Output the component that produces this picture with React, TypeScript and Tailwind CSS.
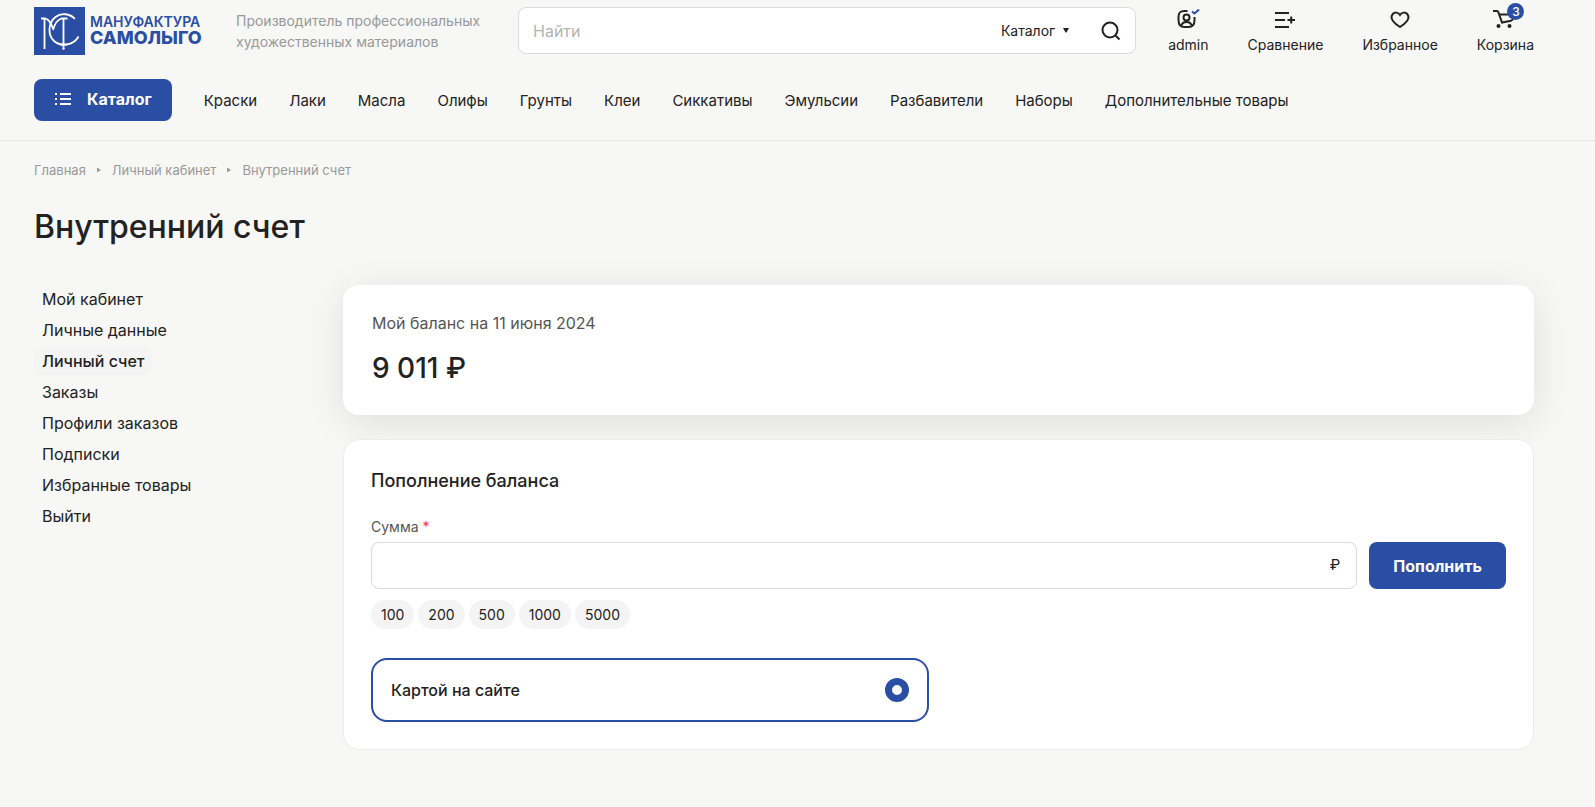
import { useState, type ReactNode } from "react";

const NAV_LINKS = [
  "Краски",
  "Лаки",
  "Масла",
  "Олифы",
  "Грунты",
  "Клеи",
  "Сиккативы",
  "Эмульсии",
  "Разбавители",
  "Наборы",
  "Дополнительные товары",
];

const ACCOUNT_LINKS = [
  "Мой кабинет",
  "Личные данные",
  "Личный счет",
  "Заказы",
  "Профили заказов",
  "Подписки",
  "Избранные товары",
  "Выйти",
];

const AMOUNTS = ["100", "200", "500", "1000", "5000"];

const Logo = () => (
  <a href="#" className="flex w-[170px] shrink-0 items-center gap-[5px] text-[#2b4ea5]">
    <svg width="51" height="48" viewBox="0 0 51 48" fill="none" aria-hidden="true">
      <rect width="51" height="48" fill="#2b4ea5" />
      <g stroke="#fff" strokeWidth="1.8">
        <path d="M10.5 11v31M7 11.500h4.500c3.500 1 5 4 7.500 10M19 23c1.500-6 4-10 8.500-11.500h6" />
        <path d="M29.500 12v28.500M26 37.500h7.500" />
        <path d="M41 12c-5-5.500-14-6.500-19.500-2C14 16 13.500 28 20 34c7.500 6.500 20 4 24.500-4.500" />
      </g>
      <circle cx="29.500" cy="41.500" r="1.200" fill="#fff" />
    </svg>
    <span className="flex flex-col pb-0.5">
      <span className="text-[14px] leading-4 font-semibold">МАНУФАКТУРА</span>
      <span className="text-[18px] leading-4 font-extrabold">САМОЛЫГО</span>
    </span>
  </a>
);

const HeaderLink = ({ label, badge, children }: { label: string; badge?: number; children: ReactNode }) => (
  <a href="#" className="flex flex-col items-center text-sm leading-5 hover:text-[#2b4ea5]">
    <span className="relative flex h-7 items-start justify-center pt-0.5">
      {children}
      {badge && (
        <span className="absolute -top-1 left-3.5 size-[17px] rounded-full bg-[#2b4ea5] text-center text-xs leading-[17px] font-medium text-white">
          {badge}
        </span>
      )}
    </span>
    {label}
  </a>
);

const Header = () => (
  <header className="border-b border-[#e5e5e3] pt-[7px] pr-[61px] pb-[19px] pl-[34px]">
    <div className="flex items-start">
      <Logo />
      <p className="ml-8 w-[250px] shrink-0 pt-[3px] text-sm leading-[21px] text-[#999]">
        Производитель профессиональных художественных материалов
      </p>
      <form
        className="ml-8 flex h-[47px] grow items-center rounded-lg border border-[#d9dbde] bg-white"
        onSubmit={(e) => e.preventDefault()}
      >
        <input
          aria-label="Поиск"
          placeholder="Найти"
          className="min-w-0 grow pl-3.5 text-base outline-none placeholder:text-[#b3b3b3]"
        />
        <button type="button" className="flex items-center gap-2 text-sm">
          Каталог
          <svg width="6" height="5" viewBox="0 0 6 5" aria-hidden="true">
            <path d="M0 0h6L3.500 4.500h-1z" fill="#222" />
          </svg>
        </button>
        <button aria-label="Найти" className="mr-3.5 ml-8">
          <svg width="20" height="20" viewBox="0 0 20 20" fill="none" stroke="#222" strokeWidth="2" aria-hidden="true">
            <circle cx="9" cy="9" r="7.500" />
            <path d="M14.500 14.500l4 4" />
          </svg>
        </button>
      </form>
      <div className="ml-8 flex shrink-0 gap-[39px]">
        <HeaderLink label="admin">
          <svg width="24" height="20" viewBox="0 0 24 20" fill="none" stroke="#222" strokeWidth="2" aria-hidden="true">
            <path d="M11.500 2H8.500C4 2 2.500 3.500 2.500 8v3c0 4.500 1.500 7 6 7h4c4.500 0 6-2.500 6-7V8" />
            <circle cx="10.500" cy="8.500" r="3" />
            <path d="M5.500 16.500c.5-2.500 2.500-3.500 5-3.500s4.500 1 5 3.500" />
            <path d="M16 2.500l2.500 2L23 .500" stroke="#2b4ea5" />
          </svg>
        </HeaderLink>
        <HeaderLink label="Сравнение">
          <svg width="20" height="20" viewBox="0 0 20 20" fill="none" stroke="#222" strokeWidth="2" aria-hidden="true">
            <path d="M0 4h14M0 11h10M0 18h14M12.500 11H20M16.200 7.500v7" />
          </svg>
        </HeaderLink>
        <HeaderLink label="Избранное">
          <svg width="20" height="20" viewBox="0 0 20 20" fill="none" stroke="#222" strokeWidth="2" aria-hidden="true">
            <path d="M10 6C8 3 4.500 3 2.800 5 1 7.200 1.500 10 3 12c1.800 2.500 4.500 4.500 7 6 2.500-1.500 5.200-3.500 7-6 1.500-2 2-4.800.2-7C15.500 3 12 3 10 6z" />
          </svg>
        </HeaderLink>
        <HeaderLink label="Корзина" badge={3}>
          <svg width="24" height="20" viewBox="0 0 24 20" fill="none" stroke="#222" strokeWidth="2" aria-hidden="true">
            <path d="M0 2h4c.7 0 1 .300 1.300 1L9 13.500l9-1.800c1-.200 1.500-.700 1.800-1.700L21 5" />
            <path d="M6 5.500h14" />
            <circle cx="5.500" cy="17" r="2" fill="#222" stroke="none" />
            <circle cx="16.500" cy="17" r="2" fill="#222" stroke="none" />
          </svg>
        </HeaderLink>
      </div>
    </div>
    <div className="mt-6 flex items-center">
      <button className="flex h-[42px] shrink-0 items-center gap-4 rounded-lg bg-[#2b4ea5] pr-5 pb-0.5 pl-[21px] font-bold text-white">
        <svg width="16" height="12" viewBox="0 0 16 12" fill="none" stroke="#fff" strokeWidth="2" aria-hidden="true">
          <path d="M0 1h2M0 6h2M0 11h2M5 1h11M5 6h11M5 11h11" />
        </svg>
        Каталог
      </button>
      <nav className="ml-8 flex gap-8 pt-0.5 text-[15px]">
        {NAV_LINKS.map((link) => (
          <a key={link} href="#" className="whitespace-nowrap hover:text-[#2b4ea5]">
            {link}
          </a>
        ))}
      </nav>
    </div>
  </header>
);

const Arrow = () => (
  <svg width="4" height="6" viewBox="0 0 4 6" aria-hidden="true">
    <path d="M0 0.500L4 3 0 5.500z" fill="#999" />
  </svg>
);

const Breadcrumbs = () => (
  <nav aria-label="Навигация" className="flex items-center gap-[11px] text-[13px] leading-5 text-[#999]">
    <a href="#">Главная</a>
    <Arrow />
    <a href="#">Личный кабинет</a>
    <Arrow />
    <span>Внутренний счет</span>
  </nav>
);

const SideMenu = () => (
  <nav className="flex w-[309px] shrink-0 flex-col items-start gap-[3px]">
    {ACCOUNT_LINKS.map((link) => (
      <a
        key={link}
        href="#"
        className={
          link === "Личный счет"
            ? "rounded-lg bg-[#f4f4f4] px-2 leading-7 font-medium"
            : "rounded-lg px-2 leading-7 hover:text-[#2b4ea5]"
        }
      >
        {link}
      </a>
    ))}
  </nav>
);

const TopUpForm = () => {
  const [amount, setAmount] = useState("");
  return (
    <form
      className="rounded-2xl border border-[#ececec] bg-white p-[27px]"
      onSubmit={(e) => e.preventDefault()}
    >
      <h2 className="text-lg leading-7 font-medium">Пополнение баланса</h2>
      <label htmlFor="amount" className="mt-5 block text-sm leading-6 text-[#555]">
        Сумма <span className="text-[#f33]">*</span>
      </label>
      <div className="mt-[3px] flex gap-3">
        <div className="flex h-[47px] grow items-center rounded-lg border border-[#d9dbde] pr-4">
          <input
            id="amount"
            value={amount}
            onChange={(e) => setAmount(e.target.value)}
            className="min-w-0 grow px-4 outline-none"
          />
          <span className="text-[15px]">₽</span>
        </div>
        <button className="h-[47px] rounded-lg bg-[#2b4ea5] px-6 font-bold text-white">Пополнить</button>
      </div>
      <div className="mt-[11px] flex gap-1">
        {AMOUNTS.map((value) => (
          <button
            key={value}
            type="button"
            onClick={() => setAmount(value)}
            className="rounded-full bg-[#f4f4f4] px-2.5 text-sm leading-[29px]"
          >
            {value}
          </button>
        ))}
      </div>
      <div className="mt-[29px] grid grid-cols-2 gap-5">
        <label className="flex h-16 items-center justify-between rounded-2xl border-2 border-[#2b4ea5] px-[18px] font-medium">
          Картой на сайте
          <input
            type="radio"
            name="payment"
            defaultChecked
            className="size-6 appearance-none rounded-full border-[7px] border-[#2b4ea5] bg-[#f7f7f7]"
          />
        </label>
      </div>
    </form>
  );
};

const App = () => (
  <div className="min-h-screen bg-[#f7f7f5] font-['Inter','Liberation_Sans',sans-serif] text-base text-[#222]">
    <Header />
    <main className="pt-[19px] pr-[61px] pb-14 pl-[34px]">
      <Breadcrumbs />
      <h1 className="mt-[25px] text-[32px] leading-[44px] font-medium">Внутренний счет</h1>
      <div className="mt-9 flex items-start">
        <SideMenu />
        <div className="flex min-w-0 grow flex-col gap-6">
          <section className="rounded-2xl bg-white px-[29px] pt-[26px] pb-[27px] shadow-[0_8px_40px_rgba(0,0,0,0.1)]">
            <p className="leading-6 text-[#555]">Мой баланс на 11 июня 2024</p>
            <p className="mt-[13px] text-[28px] leading-10 font-medium">9 011 ₽</p>
          </section>
          <TopUpForm />
        </div>
      </div>
    </main>
  </div>
);

export default App;
